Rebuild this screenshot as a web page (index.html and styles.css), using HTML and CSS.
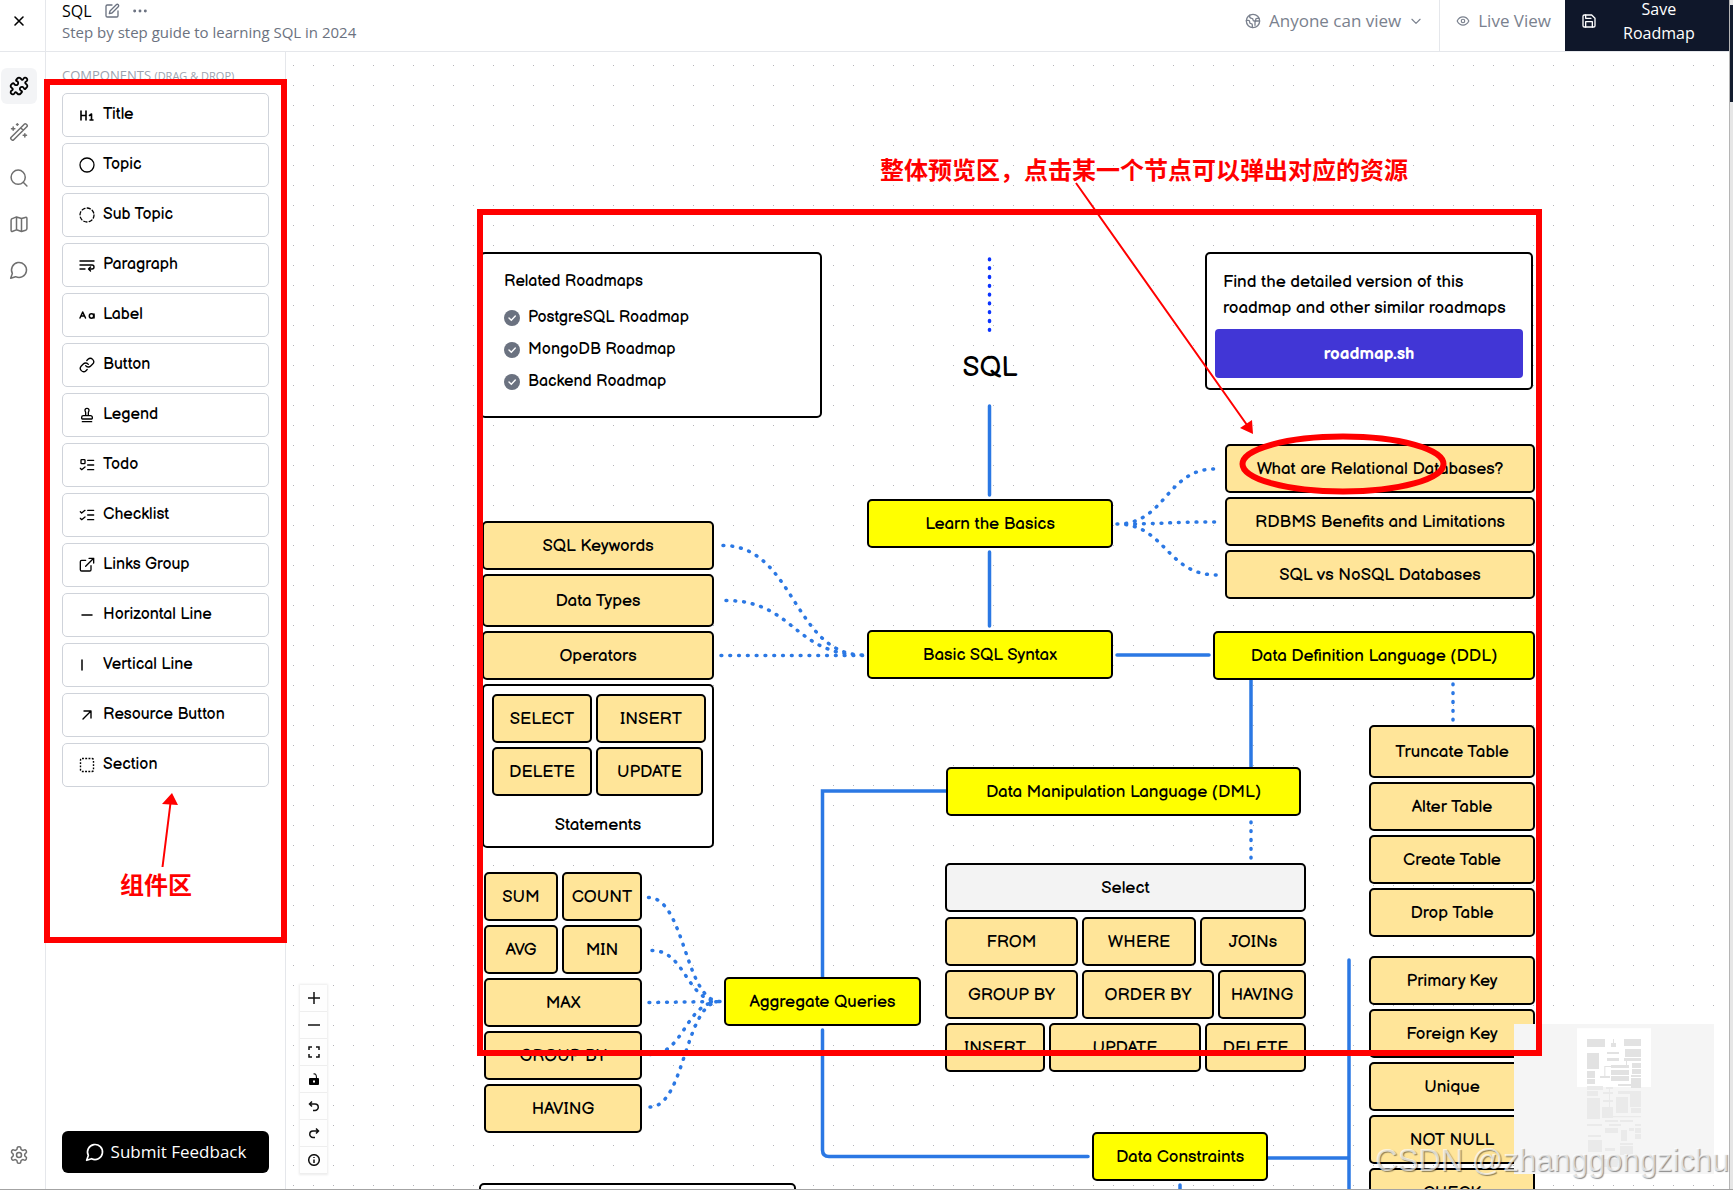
FILE: index.html
```html
<!DOCTYPE html>
<html lang="en">
<head>
<meta charset="utf-8">
<title>SQL Roadmap Editor</title>
<link rel="stylesheet" href="styles.css">
</head>
<body>
<div class="app">
  <header class="header">
    <button class="close" aria-label="Close"><svg class="icon" width="16" height="16" viewBox="0 0 16 16"><path d="M4 4l8 8M12 4l-8 8" stroke-width="1.600"/></svg></button>
    <div class="heading">
      <div class="heading-row">
        <h1>SQL</h1>
        <button class="plain" aria-label="Edit"><svg class="icon" width="16" height="16" viewBox="0 0 24 24"><path d="M12 3H5a2 2 0 0 0-2 2v14a2 2 0 0 0 2 2h14a2 2 0 0 0 2-2v-7"/><path d="M18.4 2.6a2.1 2.1 0 0 1 3 3L12 15l-4 1 1-4Z"/></svg></button>
        <button class="plain" aria-label="More"><svg class="icon" width="16" height="16" viewBox="0 0 24 24"><g fill="currentColor"><circle cx="4" cy="12" r="1.2"/><circle cx="12" cy="12" r="1.2"/><circle cx="20" cy="12" r="1.2"/></g></svg></button>
      </div>
      <p>Step by step guide to learning SQL in 2024</p>
    </div>
    <button class="head-btn share"><svg class="icon" width="16" height="16" viewBox="0 0 24 24"><circle cx="12" cy="12" r="10"/><path d="M21.5 12h-4.500a2 2 0 0 0-2 2v4.500M7 3.300V5a3 3 0 0 0 3 3 2 2 0 0 1 2 2 2 2 0 0 0 4 0c0-1.100.9-2 2-2h3M11 21.900V18a2 2 0 0 0-2-2 2 2 0 0 1-2-2v-1a2 2 0 0 0-2-2H2"/></svg><span>Anyone can view</span><svg class="icon" width="14" height="14" viewBox="0 0 24 24"><path d="m5 9 7 7 7-7"/></svg></button>
    <button class="head-btn live"><svg class="icon" width="14" height="14" viewBox="0 0 24 24"><path d="M2 12s3.500-7 10-7 10 7 10 7-3.500 7-10 7-10-7-10-7Z"/><circle cx="12" cy="12" r="3"/></svg><span>Live View</span></button>
    <button class="save"><svg class="icon" width="16" height="16" viewBox="0 0 24 24"><path d="M19 21H5a2 2 0 0 1-2-2V5a2 2 0 0 1 2-2h11l5 5v11a2 2 0 0 1-2 2z"/><path d="M17 21v-8H7v8M7 3v5h8"/></svg><span>Save Roadmap</span></button>
  </header>

  <nav class="rail">
    <button class="rail-btn active" aria-label="Components"><svg class="icon" width="20" height="20" viewBox="0 0 24 24"><path d="M19.439 7.850c-.049.322.059.648.289.878l1.568 1.568c.470.470.706 1.087.706 1.704s-.235 1.233-.706 1.704l-1.611 1.611a.98.98 0 0 1-.837.276c-.470-.070-.802-.480-.968-.925a2.501 2.501 0 1 0-3.214 3.214c.446.166.855.497.925.968a.979.979 0 0 1-.276.837l-1.610 1.610a2.404 2.404 0 0 1-1.705.707 2.402 2.402 0 0 1-1.704-.706l-1.568-1.568a1.026 1.026 0 0 0-.877-.290c-.493.074-.840.504-1.020.968a2.500 2.500 0 1 1-3.237-3.237c.464-.180.894-.527.967-1.020a1.026 1.026 0 0 0-.289-.877l-1.568-1.568A2.402 2.402 0 0 1 1.998 12c0-.617.236-1.234.706-1.704L4.230 8.770c.240-.240.581-.353.917-.303.515.077.877.528 1.073 1.010a2.500 2.500 0 1 0 3.259-3.259c-.482-.196-.933-.558-1.010-1.073-.050-.336.062-.676.303-.917l1.525-1.525A2.402 2.402 0 0 1 12 1.998c.617 0 1.234.236 1.704.706l1.568 1.568c.230.230.556.338.877.290.493-.074.840-.504 1.020-.968a2.500 2.500 0 1 1 3.237 3.237c-.464.180-.894.527-.967 1.020Z"/></svg></button>
    <button class="rail-btn" aria-label="Magic"><svg class="icon" width="20" height="20" viewBox="0 0 24 24"><path d="m21.640 3.640-1.280-1.280a1.210 1.210 0 0 0-1.720 0L2.360 18.640a1.210 1.210 0 0 0 0 1.720l1.280 1.280a1.200 1.200 0 0 0 1.720 0L21.640 5.360a1.200 1.200 0 0 0 0-1.720M14 7l3 3M5 6v4M19 14v4M10 2v2M7 8H3M21 16h-4M11 3H9"/></svg></button>
    <button class="rail-btn" aria-label="Search"><svg class="icon" width="20" height="20" viewBox="0 0 24 24"><circle cx="11" cy="11" r="8.500"/><path d="m21.500 21.500-4.400-4.400"/></svg></button>
    <button class="rail-btn" aria-label="Map"><svg class="icon" width="20" height="20" viewBox="0 0 24 24"><path d="M9 3.500 4 5.500Q2.500 6 2.500 7.500v12q0 2 2 1.200L9 19l6 2 5-1.500q1.500-.5 1.500-2v-12q0-2-2-1.400L15 5.500ZM9 3.500V19M15 5.500V21"/></svg></button>
    <button class="rail-btn" aria-label="Chat"><svg class="icon" width="20" height="20" viewBox="0 0 24 24"><path d="M7.900 20A9 9 0 1 0 4 16.100L2 22Z"/></svg></button>
    <button class="rail-btn last" aria-label="Settings"><svg class="icon" width="20" height="20" viewBox="0 0 24 24"><path d="M12.220 2h-.440a2 2 0 0 0-2 2v.180a2 2 0 0 1-1 1.730l-.430.250a2 2 0 0 1-2 0l-.150-.080a2 2 0 0 0-2.730.730l-.220.380a2 2 0 0 0 .730 2.730l.150.100a2 2 0 0 1 1 1.720v.510a2 2 0 0 1-1 1.740l-.150.090a2 2 0 0 0-.730 2.730l.220.380a2 2 0 0 0 2.730.730l.150-.080a2 2 0 0 1 2 0l.430.250a2 2 0 0 1 1 1.730V20a2 2 0 0 0 2 2h.440a2 2 0 0 0 2-2v-.180a2 2 0 0 1 1-1.730l.430-.250a2 2 0 0 1 2 0l.150.080a2 2 0 0 0 2.730-.730l.220-.390a2 2 0 0 0-.730-2.730l-.150-.080a2 2 0 0 1-1-1.740v-.500a2 2 0 0 1 1-1.740l.150-.090a2 2 0 0 0 .730-2.730l-.220-.380a2 2 0 0 0-2.730-.730l-.150.080a2 2 0 0 1-2 0l-.430-.250a2 2 0 0 1-1-1.730V4a2 2 0 0 0-2-2z"/><circle cx="12" cy="12" r="3"/></svg></button>
  </nav>

  <aside class="sidebar">
    <h2>Components <small>(Drag &amp; Drop)</small></h2>
    <div class="palette">
      <button class="item"><svg class="icon" width="16" height="16" viewBox="0 0 16 16"><path d="M2 4v9M7 4v9M2 8.500h5M10.500 8.500 12.500 7v6M11 13h3" stroke-width="1.600"/></svg><span>Title</span></button>
      <button class="item"><svg class="icon" width="16" height="16" viewBox="0 0 16 16"><circle cx="8" cy="8" r="7" stroke-width="1.300"/></svg><span>Topic</span></button>
      <button class="item"><svg class="icon" width="16" height="16" viewBox="0 0 16 16"><circle cx="8" cy="8" r="7" stroke-width="1.300" stroke-dasharray="3.200 2.300"/></svg><span>Sub Topic</span></button>
      <button class="item"><svg class="icon" width="16" height="16" viewBox="0 0 16 16"><path d="M1 4h14M1 8h12a2 2 0 0 1 0 4h-3M1 12h5M11.500 10l-2 2 2 2" stroke-width="1.400"/></svg><span>Paragraph</span></button>
      <button class="item"><svg class="icon" width="16" height="16" viewBox="0 0 16 16"><path d="M1 11 3.700 5 6.500 11M2 9h3.500M15 7v4" stroke-width="1.500"/><circle cx="12.500" cy="9" r="2.200" stroke-width="1.500"/></svg><span>Label</span></button>
      <button class="item"><svg class="icon" width="16" height="16" viewBox="0 0 24 24"><path d="M10 13a5 5 0 0 0 7.540.540l3-3a5 5 0 0 0-7.070-7.070l-1.720 1.710M14 11a5 5 0 0 0-7.540-.540l-3 3a5 5 0 0 0 7.070 7.070l1.710-1.710"/></svg><span>Button</span></button>
      <button class="item"><svg class="icon" width="16" height="16" viewBox="0 0 24 24"><path d="M5 22h14M19.270 13.730A2.500 2.500 0 0 0 17.500 13h-11A2.500 2.500 0 0 0 4 15.500V17a1 1 0 0 0 1 1h14a1 1 0 0 0 1-1v-1.500c0-.660-.260-1.300-.730-1.770ZM14 13V8.500C14 7 15 7 15 5a3 3 0 0 0-6 0c0 2 1 2 1 3.500V13"/></svg><span>Legend</span></button>
      <button class="item"><svg class="icon" width="16" height="16" viewBox="0 0 24 24"><rect x="3" y="4" width="6" height="6" rx="1"/><path d="m2 17 2 2 5-4M13 5h9M13 12h9M13 19h9"/></svg><span>Todo</span></button>
      <button class="item"><svg class="icon" width="16" height="16" viewBox="0 0 24 24"><path d="m2 17 2 2 5-4M2 7l2 2 5-4M13 5h9M13 12h9M13 19h9"/></svg><span>Checklist</span></button>
      <button class="item"><svg class="icon" width="16" height="16" viewBox="0 0 24 24"><path d="M15 2h7v7M10 14 22 2M18 13v6a2 2 0 0 1-2 2H4a2 2 0 0 1-2-2V7a2 2 0 0 1 2-2h6"/></svg><span>Links Group</span></button>
      <button class="item"><svg class="icon" width="16" height="16" viewBox="0 0 16 16"><path d="M3 8h10" stroke-width="1.500"/></svg><span>Horizontal Line</span></button>
      <button class="item"><svg class="icon" width="16" height="16" viewBox="0 0 16 16"><path d="M3 3v10" stroke-width="1.500"/></svg><span>Vertical Line</span></button>
      <button class="item"><svg class="icon" width="16" height="16" viewBox="0 0 16 16"><path d="M5 4h7v7M12 4l-8 8" stroke-width="1.400"/></svg><span>Resource Button</span></button>
      <button class="item"><svg class="icon" width="16" height="16" viewBox="0 0 16 16"><rect x="1.500" y="1.500" width="13" height="13" rx="1.500" stroke-width="1.400" stroke-linecap="butt" stroke-dasharray="1.900 1.350"/></svg><span>Section</span></button>
    </div>
    <button class="feedback"><svg class="icon" width="20" height="20" viewBox="0 0 24 24"><path d="M7.900 20A9 9 0 1 0 4 16.100L2 22Z"/></svg>Submit Feedback</button>
  </aside>

  <main class="canvas">
    <div class="board">
      <svg class="edges" width="1733" height="1190" viewBox="0 0 1733 1190">
        <path d="M989.500 406V495M989.500 552V626M1117 655H1209M1251 679V767M946 791H822.500V978M822.500 1030V1150Q822.500 1156.500 829 1156.500H1088M1268 1158H1349M1349 960V1195M1180 1185V1195"/>
        <path class="dots accent" d="M989.500 259V332"/>
        <g class="dots">
          <path d="M1117 524C1166 524 1166 469 1215 469M1117 524C1166 524 1166 522 1215 522M1117 524C1166 524 1166 575 1217 575"/>
          <path d="M723 545.500C794 545.500 794 655 863 655M726 600.500C794 600.500 794 655 863 655M721 655.500H863"/>
          <path d="M648.500 897.500C685 897.500 685 1001.500 720 1001.500M652 950.500C686 950.500 686 1001.500 720 1001.500M649 1002.500L720 1001.500M650 1054.500C685 1054.500 685 1001.500 720 1001.500M650 1107C685 1107 685 1001.500 720 1001.500"/>
          <path d="M1453 684V722M1251 822V859"/>
        </g>
      </svg>

      <section class="card related">
        <h3>Related Roadmaps</h3>
        <a href="#"><svg width="16" height="16" viewBox="0 0 16 16"><circle cx="8" cy="8" r="8" fill="#6b7280"/><path class="tick" d="m5 8 2.300 2.300L11.300 6"/></svg>PostgreSQL Roadmap</a>
        <a href="#"><svg width="16" height="16" viewBox="0 0 16 16"><circle cx="8" cy="8" r="8" fill="#6b7280"/><path class="tick" d="m5 8 2.300 2.300L11.300 6"/></svg>MongoDB Roadmap</a>
        <a href="#"><svg width="16" height="16" viewBox="0 0 16 16"><circle cx="8" cy="8" r="8" fill="#6b7280"/><path class="tick" d="m5 8 2.300 2.300L11.300 6"/></svg>Backend Roadmap</a>
      </section>
      <div class="map-title">SQL</div>
      <section class="card find">
        <p>Find the detailed version of this roadmap and other similar roadmaps</p>
        <a href="#">roadmap.sh</a>
      </section>

      <button class="node topic learn">Learn the Basics</button>
      <button class="node topic syntax">Basic SQL Syntax</button>
      <button class="node topic ddl">Data Definition Language (DDL)</button>
      <button class="node topic dml">Data Manipulation Language (DML)</button>
      <button class="node topic aggregate">Aggregate Queries</button>
      <button class="node topic constraints">Data Constraints</button>

      <div class="group relational">
        <button class="node">What are Relational Databases?</button>
        <button class="node">RDBMS Benefits and Limitations</button>
        <button class="node">SQL vs NoSQL Databases</button>
      </div>
      <div class="group basics">
        <button class="node">SQL Keywords</button>
        <button class="node tall">Data Types</button>
        <button class="node">Operators</button>
        <div class="card statements">
          <div class="row"><button class="node w-100">SELECT</button><button class="node w-110">INSERT</button></div>
          <div class="row"><button class="node w-100">DELETE</button><button class="node w-107">UPDATE</button></div>
          <p>Statements</p>
        </div>
      </div>
      <div class="group tables">
        <button class="node tall">Truncate Table</button>
        <button class="node">Alter Table</button>
        <button class="node">Create Table</button>
        <button class="node">Drop Table</button>
      </div>
      <div class="group keys">
        <button class="node">Primary Key</button>
        <button class="node">Foreign Key</button>
        <button class="node">Unique</button>
        <button class="node">NOT NULL</button>
        <button class="node">CHECK</button>
      </div>
      <div class="group clauses">
        <button class="node muted">Select</button>
        <div class="row"><button class="node w-133">FROM</button><button class="node w-114">WHERE</button><button class="node fill">JOINs</button></div>
        <div class="row"><button class="node w-133">GROUP BY</button><button class="node w-132">ORDER BY</button><button class="node fill">HAVING</button></div>
        <div class="row"><button class="node w-100">INSERT</button><button class="node w-152">UPDATE</button><button class="node fill">DELETE</button></div>
      </div>
      <div class="group functions">
        <div class="row"><button class="node w-74">SUM</button><button class="node fill">COUNT</button></div>
        <div class="row"><button class="node w-74">AVG</button><button class="node fill">MIN</button></div>
        <button class="node">MAX</button>
        <button class="node">GROUP BY</button>
        <button class="node">HAVING</button>
      </div>
      <div class="card next"></div>
    </div>

    <div class="controls">
      <button aria-label="Zoom in"><svg width="12" height="12" viewBox="0 0 12 12"><path d="M0 6h12M6 0v12"/></svg></button>
      <button aria-label="Zoom out"><svg width="12" height="12" viewBox="0 0 12 12"><path d="M0 6h12"/></svg></button>
      <button aria-label="Fit view"><svg width="12" height="12" viewBox="0 0 12 12"><path d="M1 4V1h3M8 1h3v3M11 8v3H8M4 11H1V8"/></svg></button>
      <button aria-label="Lock"><svg width="12" height="12" viewBox="0 0 12 12"><path d="M2 5h8q1 0 1 1v5q0 1-1 1H2q-1 0-1-1V6q0-1 1-1Z" fill="#000" stroke="none"/><path d="M5.500 1Q8.500 0 8.500 5" stroke-width="1.100"/><path d="M5 7.500h2v2H5z" fill="#fff" stroke="none"/></svg></button>
      <button aria-label="Undo"><svg width="12" height="12" viewBox="0 0 12 12"><path d="M4 1.500 1.500 4 4 6.500M1.500 4H7a3 3 0 0 1 0 6.500H5"/></svg></button>
      <button aria-label="Redo"><svg width="12" height="12" viewBox="0 0 12 12"><path d="M8 1.500 10.500 4 8 6.500M10.500 4H5a3 3 0 0 0 0 6.500h2"/></svg></button>
      <button aria-label="Info"><svg width="12" height="12" viewBox="0 0 12 12"><circle cx="6" cy="6" r="5.300"/><path d="M6 5.500V9M6 3v1"/></svg></button>
    </div>

    <svg class="minimap" viewBox="0 0 600 450">
      <path fill="#f5f5f5" d="M0 0h600v450H0z"/>
      <path fill="#fff" d="M189 13h222v176H189z"/>
      <path fill="#e2e2e2" d="M219 45h54v24h-54zM297 45h3v12h-3zM291 57h15v12h-15zM330 45h51v21h-51zM333 75h48v24h-48zM219 87h36v48h-36zM279 84h36v6h-36zM279 102h36v9h-36zM330 102h51v9h-51zM336 111h3v12h-3zM354 117h27v15h-27zM291 123h54v9h-54zM271 126h20v3h-17v27h-3zM354 135h27v15h-27zM291 138h54v15h-54zM291 156h54v15h-54zM219 141h24v21h-24zM258 156h30v6h-30zM219 165h24v15h-24zM351 153h30v6h-30zM351 162h30v30h-30zM312 180h39v6h-39z"/>
      <path fill="#eaeaea" d="M219 186h48v12h-48zM276 189h21v6h-21zM219 201h33v15h-33zM267 204h30v6h-30zM285 195h3v54h-3zM312 201h36v9h-36zM348 201h33v48h-33zM219 222h39v63h-39zM267 228h30v6h-30zM306 219h36v48h-36zM264 249h33v33h-33zM351 252h30v15h-30zM297 276h84v4h-84zM273 288h39v6h-39zM318 288h39v6h-39zM219 300h45v6h-45zM285 300h36v6h-36zM363 300h18v6h-18zM273 312h39v15h-39zM345 312h15v9h-15zM363 312h18v15h-18zM363 330h18v15h-18zM321 318h18v33h-18zM222 333h39v6h-39zM222 348h42v36h-42zM318 357h39v6h-39zM273 372h30v9h-30zM318 366h39v27h-39zM270 405h48v24h-48z"/>
    </svg>
  </main>
  <div class="scroll"><div class="thumb"></div></div>

  <div class="frame frame-palette"></div>
  <div class="frame frame-preview"></div>
  <svg class="marks" width="1733" height="1190" viewBox="0 0 1733 1190">
    <ellipse cx="1343" cy="464" rx="100.500" ry="27.500" stroke-width="6"/>
    <path d="M1076 183 1247 425M162.500 867 170.500 803" stroke-width="2"/>
    <path class="head" d="M1253 434 1240 428 1252 420ZM172 793 162 804 178 805Z"/>
  </svg>
  <p class="note note-preview" lang="zh">整体预览区，点击某一个节点可以弹出对应的资源</p>
  <p class="note note-palette" lang="zh">组件区</p>
  <p class="watermark">CSDN @zhanggongzichu</p>
</div>
</body>
</html>
```
FILE: styles.css
```css
* { box-sizing: border-box; }
body { margin: 0; font-family: "Segoe UI", "Open Sans", sans-serif; color: #000; background: #fff; }
h1, h2, h3, p { margin: 0; font-weight: 400; }
button { font: inherit; color: inherit; background: none; border: 0; padding: 0; }
a { color: inherit; text-decoration: none; }
.icon { fill: none; stroke: currentColor; stroke-width: 2; stroke-linecap: round; stroke-linejoin: round; flex: none; }

.app {
  position: relative;
  display: grid;
  grid-template: 52px 1fr / 46px 240px 1fr 4px;
  height: 100vh;
  overflow: hidden;
  border-bottom: 1px solid #a3a3a3;
}

.header { grid-column: 1 / 4; display: flex; border-bottom: 1px solid #e5e7eb; }
.close { width: 46px; padding: 0 8px 9px 0; border-right: 1px solid #e5e7eb; display: flex; align-items: center; justify-content: center; }
.heading { flex: 1; padding-left: 16px; }
.heading-row { display: flex; align-items: center; gap: 12px; height: 22px; }
.heading h1 { font-size: 16px; line-height: 22px; }
.heading p { font-size: 15px; line-height: 20px; color: #6b7280; }
.plain { display: flex; color: #6b7280; }
.head-btn { display: flex; align-items: center; color: #7a818e; font-size: 17px; padding-bottom: 10px; }
.share { gap: 8px; padding-right: 16px; border-right: 1px solid #e5e7eb; }
.live { gap: 8px; padding-left: 16px; padding-right: 14px; }
.save { width: 164px; display: flex; align-items: center; background: #0f172a; color: #fff; font-size: 16px; line-height: 24px; padding: 0 20px 9px 16px; }
.save span { flex: 1; padding-left: 26px; padding-right: 20px; }

.rail { display: flex; flex-direction: column; align-items: flex-start; gap: 10px; padding: 16px 0 16px 1px; border-right: 1px solid #e5e7eb; }
.rail-btn { width: 36px; height: 36px; border-radius: 6px; display: flex; align-items: center; justify-content: center; color: #6f6f6f; }
.rail-btn .icon { stroke-width: 1.8; }
.rail-btn.active { background: #f3f4f6; color: #000; }
.rail-btn.active .icon { stroke-width: 2.2; }
.rail-btn.last { margin-top: auto; }

.sidebar { display: flex; flex-direction: column; padding: 13px 16px 16px; border-right: 1px solid #e5e7eb; }
.sidebar h2 { font-size: 13px; line-height: 20px; color: #9ca3af; text-transform: uppercase; margin-bottom: 7px; }
.sidebar small { font-size: 11px; }
.palette { display: flex; flex-direction: column; gap: 6px; }
.item { height: 44px; display: flex; align-items: center; gap: 8px; padding: 0 17px 0 16px; border: 1px solid #cfd3da; border-radius: 5px; font: 16px "Balsamiq Sans", "Noto Sans", sans-serif; }
.item span { padding-bottom: 2px; }
.feedback { margin-top: auto; height: 42px; border-radius: 6px; background: #000; color: #fff; font-size: 17px; padding-bottom: 1px; display: flex; align-items: center; justify-content: center; gap: 6px; }

.canvas {
  position: relative;
  overflow: hidden;
  background: conic-gradient(from 270deg at 1px 1px, #b4b4b8 90deg, transparent 0) 7px 13px / 20px 20px #fff;
}
.board { position: absolute; left: -286px; top: -52px; width: 1733px; height: 1200px; font: 17px "Balsamiq Sans", "Noto Sans", sans-serif; }
.edges { position: absolute; left: 0; top: 0; fill: none; stroke: #2b78e4; stroke-width: 3.5; stroke-linecap: round; }
.dots { stroke-dasharray: 0.8 8; }
.accent { stroke: #0a33ff; }

.card { background: #fff; border: 2px solid #000; border-radius: 5px; }
.node { height: 49px; flex: none; background: #ffe599; border: 2px solid #000; border-radius: 5px; white-space: nowrap; text-align: center; }
.topic { position: absolute; background: #ff0; }
.tall { height: 53px; }
.muted { background: #f3f3f3; margin-bottom: 1px; }
.row { display: flex; gap: 4px; }
.fill { flex: 1; }
.w-74 { width: 74px; }
.w-100 { width: 100px; }
.w-107 { width: 107px; }
.w-110 { width: 110px; }
.w-114 { width: 114px; }
.w-132 { width: 132px; }
.w-133 { width: 133px; }
.w-152 { width: 152px; }

.related { position: absolute; left: 480px; top: 252px; width: 342px; height: 166px; padding: 16px 22px; display: flex; flex-direction: column; font-size: 16px; }
.related h3 { font-size: 16px; line-height: 24px; margin-bottom: 8px; }
.related a { display: flex; align-items: center; gap: 8px; line-height: 32px; }
.tick { fill: none; stroke: #fff; stroke-width: 1.4; stroke-linecap: round; }
.map-title { position: absolute; left: 946px; top: 348px; width: 88px; text-align: center; font-size: 28px; line-height: 40px; }
.find { position: absolute; left: 1205px; top: 252px; width: 328px; height: 138px; padding: 15px 8px; }
.find p { padding: 0 8px; line-height: 26px; margin-bottom: 8px; }
.find a { display: block; background: #4136d6; color: #fff; border-radius: 4px; height: 49px; line-height: 50px; text-align: center; font-weight: 700; }

.learn { left: 867px; top: 499px; width: 246px; }
.syntax { left: 867px; top: 630px; width: 246px; }
.ddl { left: 1213px; top: 631px; width: 322px; }
.dml { left: 946px; top: 767px; width: 355px; }
.aggregate { left: 724px; top: 977px; width: 197px; }
.constraints { left: 1092px; top: 1132px; width: 176px; }

.group { position: absolute; display: flex; flex-direction: column; gap: 4px; }
.relational { left: 1225px; top: 444px; width: 310px; }
.basics { left: 482px; top: 521px; width: 232px; }
.tables { left: 1369px; top: 725px; width: 166px; }
.keys { left: 1369px; top: 956px; width: 166px; }
.clauses { left: 945px; top: 863px; width: 361px; }
.functions { left: 484px; top: 872px; width: 158px; }
.statements { display: flex; flex-direction: column; gap: 4px; height: 164px; padding: 8px; text-align: center; }
.statements p { line-height: 50px; }
.next { position: absolute; left: 479px; top: 1183px; width: 317px; height: 60px; }

.controls { position: absolute; left: 14px; bottom: 15px; width: 27px; box-shadow: 0 0 2px 1px #00000014; }
.controls button { display: flex; align-items: center; justify-content: center; width: 27px; height: 27px; background: #fefefe; border-bottom: 1px solid #eee; }
.controls svg { fill: none; stroke: #111; stroke-width: 1.5; }
.minimap { position: absolute; right: 15px; bottom: 15px; width: 200px; height: 150px; }

.scroll { grid-column: 4; grid-row: 1 / 3; background: #e6e6e6; border-left: 1px solid #b5b5b5; padding-top: 5px; }
.thumb { height: 97px; background: #131c2e; }

.frame { position: absolute; border: 6px solid #f00; pointer-events: none; }
.frame-palette { left: 44px; top: 79px; width: 243px; height: 864px; }
.frame-preview { left: 477px; top: 209px; width: 1065px; height: 847px; }
.marks { position: absolute; left: 0; top: 0; fill: none; stroke: #f00; pointer-events: none; }
.head { fill: #f00; stroke: none; }
.note { position: absolute; color: #f00; font: 700 24px/32px "Noto Sans CJK SC", sans-serif; white-space: nowrap; }
.note-preview { left: 880px; top: 153px; }
.note-palette { left: 120px; top: 868px; }
.watermark { position: absolute; right: 4px; bottom: 8px; font: 31px/40px "Liberation Sans", sans-serif; color: #ffffffb3; text-shadow: 1px 1px 1px #00000070; white-space: nowrap; }
```
